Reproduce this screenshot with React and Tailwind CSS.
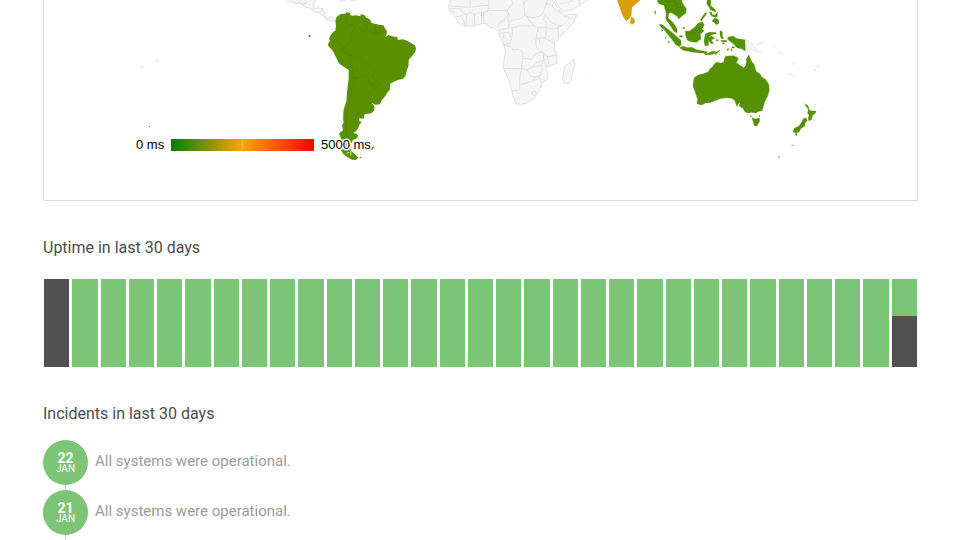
const days = Array.from({ length: 31 }, (_, index) => {
  if (index === 0) return { id: index, up: 0 };
  if (index === 30) return { id: index, up: 42 };
  return { id: index, up: 100 };
});

const incidents = [
  { day: "22", month: "JAN", text: "All systems were operational." },
  { day: "21", month: "JAN", text: "All systems were operational." },
];

// each region keeps its own 3x grid
function SouthAmerica() {
  return (
    <g transform="translate(270 0) scale(0.3333)">
      <path
        fill="#f5f5f5"
        stroke="#dddddd"
        strokeWidth="3"
        d="M46-3 60 5 72 7 80 12 88 6 98-3M72 7 84 10 96 12 107 12 112-3M88 6 98 17 108 22 118 24 122 28 134 26 130 12 140-3M122 28 136 37 150 37 158 26M134 26 144 24 158 26 164 40 160 47 146 37M160 47 168 52 176 56 184 50 194 58 192 66 182 60 170 61 160 47M204-2 216 4 228 2M240 2 252 3 262-1"
      />
      <path
        fill="#5a9000"
        d="M196 62 200 51 208 44 216 41 225 41 232 37 241 39 240 44 246 47 259 46 271 49 272 43 280 44 286 47 287 52 298 57 302 62 304 69 317 72 330 75 341 76 345 86 351 92 350 102 345 110 356 105 365 109 381 111 384 120 398 118 412 122 424 130 435 136 438 145 436 155 427 167 416 179 416 195 411 210 407 226 400 236 386 239 371 245 360 252 360 268 351 280 343 292 335 301 330 313 316 314 304 308 314 320 313 331 304 340 284 343 281 356 267 355 268 362 275 367 268 374 264 386 257 394 250 398 264 404 262 414 251 419 244 429 240 440 243 453 254 462 266 473 257 480 246 479 232 471 220 462 213 450 216 439 208 430 214 420 207 400 219 391 216 376 221 368 219 355 221 328 229 305 231 277 236 238 236 209 222 201 208 191 198 172 188 152 175 138 174 131 181 122 177 118 182 106 190 95 196 92 198 76ZM116 105h5v6h-5ZM304 442l9-3-5 10-5 1ZM269 471h5v4h-5Z"
      />
      <path
        fill="none"
        stroke="#4e8500"
        strokeWidth="2"
        d="M232 38 226 54 232 70 247 76 255 79 252 93 243 97 244 125 232 132 218 142 222 156 240 164 254 170 274 174 277 185 300 197 310 213 308 232 321 239 329 253 322 260 301 276 305 291 300 307M184 122 200 124 210 129 222 143M247 76 266 80 276 95 293 88 287 74 295 66M293 88 305 100 319 102 335 98 343 86M319 72 316 85 319 102M332 75 329 97M240 164 244 180 241 195 248 205 245 229 253 236 272 232 277 226 295 232 308 232M295 232 296 250 322 260M253 236 245 264 241 290 235 325 230 355 229 390 231 420 242 442M236 209 247 220"
      />
      <path fill="none" stroke="#ffffff" strokeWidth="2" d="M218 348v9M215 379v13M218 441 225 450M229 460 238 457M242 453 243 467" />
    </g>
  );
}

function Africa() {
  return (
    <g transform="translate(440 0) scale(0.3333)" fill="#f5f5f5" stroke="#dadada" strokeWidth="2.5" strokeLinejoin="round">
      <path d="M33-4 25 20 31 35 46 50 55 68 72 80 86 77 103 78 126 71 139 70 149 82 164 85 174 92 181 96 174 103 183 116 193 137 196 158 192 182 190 205 204 232 215 271 220 291 229 312 243 313 265 308 285 293 301 266 305 251 321 240 324 222 317 204 330 198 350 190 352 165 342 145 344 127 358 112 379 91 398 71 412 44 394 42 371 47 360 34 346 11 334-4Z" />
      <path d="M343-3 367 36 397 29 430 9 449-3M360 10 382 8 406-3M418-3 418 15" />
      <path d="M401 176 405 189 392 244 383 252 373 248 367 236 371 222 372 200 385 191 394 181Z" />
      <path
        fill="none"
        d="M30 18 90 22 91-3M31 28 46 24 60 27 70 41 83 43 90 36 103 43 124 37 141 35 147 20 146-3M91 22 102 20 144 16M31 35 46 35M46 50 59 49 71 60 75 78M59 49 71 42M83 43 78 54 79 76M103 43 105 78M124 37 126 71M131 37 132 70M141 35 147 31 173 32 202 31 205 43 191 62 180 66 174 80M202 31 218 10 214-3M202 31 208 49 202 54 208 65 204 84 176 91M208 65 221 60 243 55 255 45 251 12 260-3M251 12 249-3M255 45 264 57 282 77 260 78 240 77 217 84 204 84M258 49 278 53 301 48 309 39 319 12 323-3M311 38 318 46 308 59 319 67 318 83 294 84 282 77M319 12 329 10 348 31 362 40M318 46 328 62 352 78 368 75 389 54 371 47M318 83 340 87 355 82 368 75M355 82 355 112M318 83 319 99 314 114 344 130M294 84 289 113 314 114M289 113 287 128 292 149 305 155 323 170 352 165M290 116 299 118 298 130M217 84 217 104 210 131 190 133M179 102 193 97 206 98 213 113M193 97 188 119M190 135 215 141 218 150 237 148 246 153 249 175 276 178 286 161 305 155 311 166 310 181 289 189 277 201 262 209 245 206 190 205M249 175 244 203M277 201 303 197 313 183 310 166M323 170 326 193 319 201 313 183M262 209 272 228 286 232 301 227 307 203 303 197M245 206 241 226 239 246 237 270 215 273M241 254 257 250 279 243 286 232M279 243 299 234 304 250M276 276 284 272 289 279 282 288 276 283ZM301 255 305 261 301 266"
      />
      <path strokeWidth="1.5" d="M423 35h7M434 226l4 3M445 225l4-3" />
    </g>
  );
}

function Asia() {
  return (
    <g transform="translate(600 0) scale(0.3333)">
      <path
        fill="#d69d05"
        d="M52-3 53 6 59 22 66 43 73 56 80 62 87 57 94 46 96 22 106 13 119 3 119-3ZM94 49 103 58 105 67 96 74 90 68ZM165 30 169 36 166 44 162 40Z"
      />
      <path
        fill="#549000"
        stroke="#549000"
        strokeWidth="1"
        d="M172-3 174 9 186 15 192 14 195 28 199 40 197 54 201 64 209 73 214 82 222 94 230 99 232 90 225 76 217 66 204 54 207 39 215 38 226 45 233 50 236 57 247 47 258 39 259 26 247 8 244-3ZM178 73 187 74 200 85 217 98 231 110 242 120 244 133 239 140 227 134 215 117 203 103 194 90 182 81ZM239 143 249 139 264 143 275 142 290 149 310 153 321 155 321 159 300 159 276 156 250 151ZM256 94 269 93 284 82 295 69 307 65 313 75 305 86 312 93 301 103 303 117 289 127 272 125 261 119 257 105ZM316 102 327 97 346 97 350 101 334 104 325 111 336 109 344 114 334 120 341 132 331 129 326 121 325 137 315 137 312 123ZM360 92 368 96 366 105 371 115 364 116 360 105ZM363 121 379 121 381 126 364 125ZM386 111 400 108 406 114 417 117 435 119 436 153 425 146 411 143 399 130 390 124 382 117ZM322-3 320 12 326 19 331 29 340 33 348 37 345 28 332 17 333 5 331-3ZM327 37 334 36 337 44 344 45 353 37 352 49 347 52 335 49ZM336 63 344 54 355 58 357 70 349 74 340 65ZM301 60 312 43 319 37 320 41 304 63ZM311 158 324 161 329 157 342 153 348 155 338 163 327 164 317 165ZM343 160 356 152 360 151 347 164ZM376 171 387 168 401 167 411 172 410 181H376ZM438 181 446 166 450 181ZM249 82h5v4h-5ZM239 107h8v4h-8ZM348 119h7v3h-7ZM367 129h6v3h-6ZM381 148l5-3-2 8ZM392 150l3-5 2 8ZM396 140h7v4h-7ZM184 88l5 3-2 3ZM196 110l3 4-3 1ZM204 122l5 5-3 2Z"
      />
      <path fill="none" stroke="#458000" strokeWidth="2" d="M191-2 202 7 199 22 205 35M203 5 225 4 231 21 249 24M225 4 218-3M231 21 228 34 238 36M258 95 273 101 287 97 300 84 309 82" />
      <path fill="#f5f5f5" stroke="#e1e1e1" strokeWidth="2" d="M438 120 452 127 462 136 464 141 476 153 485 158 470 157 455 147 438 152ZM468 135 479 134 487 126" />
    </g>
  );
}

function Oceania() {
  return (
    <g transform="translate(680 40) scale(0.3333)">
      <path
        fill="#549000"
        stroke="#549000"
        strokeWidth="1"
        d="M41 121 43 113 55 105 71 101 84 96 90 86 98 80 102 73 111 66 121 70 131 67 134 55 138 49 148 50 159 53 171 52 175 57 169 68 178 75 191 83 198 76 201 55 206 45 211 55 216 67 222 72 228 94 239 101 246 112 256 118 266 132 268 151 263 168 254 186 248 206 246 212 232 215 228 220 216 217 206 219 195 216 188 204 178 199 180 187 174 192 171 200 167 190 164 181 155 175 138 173 119 176 101 184 90 188 76 189 65 195 51 191 53 179 46 157 39 139ZM216 233 226 237 238 234 239 244 230 258 223 257ZM211 227h3v3h-3ZM237 226h3v3h-3ZM374 191 384 197 389 211 396 213 408 213 406 220 398 226 394 239 387 243 384 234 388 227 383 220 385 207 379 200ZM371 235 378 234 382 241 375 250 374 259 363 265 357 276 347 279 339 275 343 265 357 258 365 247ZM346 281h5v5h-5Z"
      />
      <path fill="#8ab25a" d="M335 314h5v4h-5ZM294 349h5v4h-5Z" />
      <path
        fill="none"
        stroke="#e3e3e3"
        strokeWidth="3"
        d="M234 9 247 10 253 3M257 7 262 14M278 18 285 23M293 36 304 38 312 46M339 68 345 78M325 100 336 104 344 111M402 91 408 94 403 87M411 81 417 79"
      />
    </g>
  );
}

function LatencyMap() {
  return (
    <svg
      viewBox="44 0 873 200"
      className="block w-full h-auto"
      role="img"
      aria-label="Response time by country"
    >
      <defs>
        <linearGradient id="latency">
          <stop offset="0" stopColor="#008000" />
          <stop offset="0.5" stopColor="#ffa500" />
          <stop offset="1" stopColor="#ff0000" />
        </linearGradient>
      </defs>
      <SouthAmerica />
      <Africa />
      <Asia />
      <Oceania />
      <path fill="none" stroke="#dddddd" d="M140 67h3M156 61h2" />
      <path fill="#5f9424" d="M149 126h1v1h-1z" />
      <rect x="171" y="139" width="143" height="12" fill="url(#latency)" />
      <path stroke="#ffbf4d" d="M242.5 139v12" />
      <g
        className="font-['Liberation_Sans',Arial,sans-serif] text-[13px]"
        fill="#000000"
        stroke="#ffffff"
        strokeWidth="3"
        paintOrder="stroke"
      >
        <text x="136" y="149">0 ms</text>
        <text x="321" y="149">5000 ms</text>
      </g>
    </svg>
  );
}

function App() {
  return (
    <main className="min-h-screen bg-white pl-[43px] pr-[42px] font-[Roboto,sans-serif] text-[#4d4d4d]">
      <section className="border border-t-0 border-[#dddddd]">
        <LatencyMap />
      </section>

      <section className="pt-[34px]">
        <h2 className="text-[16px] leading-[26px]">Uptime in last 30 days</h2>
        <div className="mt-[18px] grid grid-cols-[repeat(31,minmax(0,1fr))] gap-[3px] px-px">
          {days.map((day) => (
            <div key={day.id} className="h-[88px] bg-[#505050]">
              <div className="bg-[#7cc576]" style={{ height: `${day.up}%` }} />
            </div>
          ))}
        </div>
      </section>

      <section className="pt-[34px]">
        <h2 className="text-[16px] leading-[26px]">Incidents in last 30 days</h2>
        <ul className="mt-[13px]">
          {incidents.map((item) => (
            <li key={item.day} className="flex gap-[7px]">
              <div className="flex flex-col items-center">
                <time className="flex size-[45px] flex-col items-center justify-center rounded-full bg-[#7cc576] text-white">
                  <span className="text-[14px] leading-3 font-bold">{item.day}</span>
                  <span className="text-[10px] leading-[10px]">{item.month}</span>
                </time>
                <span className="h-[5px] w-px bg-[#cccccc]" />
              </div>
              <p className="pt-[11px] text-[15px] leading-5 text-[#9b9b9b]">{item.text}</p>
            </li>
          ))}
        </ul>
      </section>
    </main>
  );
}

export default App;
